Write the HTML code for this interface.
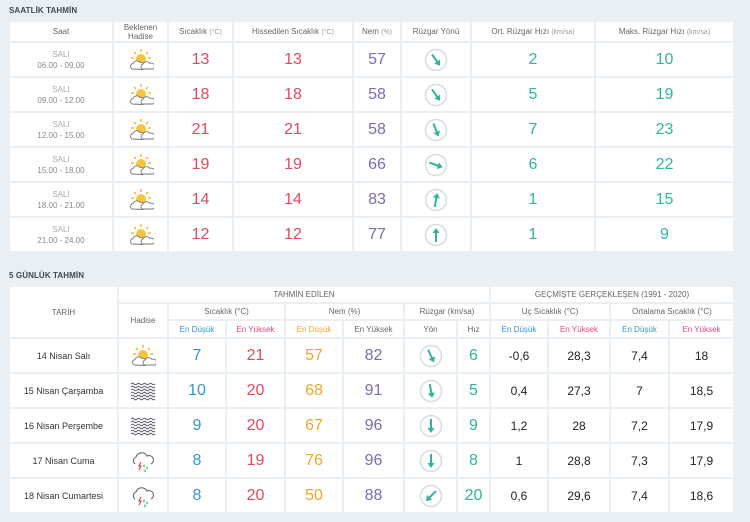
<!DOCTYPE html>
<html><head><meta charset="utf-8"><style>
body{margin:0;background:#e9eff3;width:750px;height:522px;overflow:hidden;font-family:"Liberation Sans",sans-serif;position:relative}
.t{position:absolute;left:9px;font-size:8px;font-weight:bold;color:#3c4a55;letter-spacing:.1px}
table{position:absolute;left:8px;border-spacing:2px;table-layout:fixed;border-collapse:separate}
td{background:#fff;text-align:center;padding:0;color:#666;font-size:8px;overflow:hidden;white-space:nowrap}
td small{color:#999;font-size:7px}
.d{font-size:8px;color:#888;line-height:11px}
.n{font-size:16px}
.r{color:#e5485f}.p{color:#7c6bb2}.g{color:#2fb59c}.b{color:#3596cc}.o{color:#eea62a}.k{color:#222;font-size:12px}
.hb{color:#3596cc}.hr{color:#e5487a}.ho{color:#eea62a}
svg{display:block;margin:auto}
</style></head><body>
<svg width="0" height="0" style="position:absolute"><defs>
<g id="sc"><g stroke="#f2b122" stroke-width="1.3"><line x1="13" y1="1" x2="13" y2="4"/><line x1="6" y1="4" x2="8" y2="6"/><line x1="20" y1="4" x2="18" y2="6"/><line x1="3" y1="10" x2="6" y2="10"/><line x1="23" y1="10" x2="20" y2="10"/></g><circle cx="13" cy="11" r="5" fill="#f7c53a"/><path d="M4 21a3 3 0 0 1 1-5.5 4 4 0 0 1 7-1 3 3 0 0 1 4 3 2.5 2.5 0 0 1-1 4z" fill="#fff" stroke="#777" stroke-width=".9"/><path d="M14 21a3 3 0 0 1 1-5 4 4 0 0 1 7-.5 3 3 0 0 1 3 5.5z" fill="#fff" stroke="#777" stroke-width=".9"/></g>
<g id="fog" fill="none" stroke="#667" stroke-width="1.1"><path d="M1 5q1.5-1.5 3 0t3 0 3 0 3 0 3 0 3 0 3 0 3 0"/><path d="M1 8q1.5-1.5 3 0t3 0 3 0 3 0 3 0 3 0 3 0 3 0"/><path d="M1 11q1.5-1.5 3 0t3 0 3 0 3 0 3 0 3 0 3 0 3 0"/><path d="M1 14q1.5-1.5 3 0t3 0 3 0 3 0 3 0 3 0 3 0 3 0"/><path d="M1 17q1.5-1.5 3 0t3 0 3 0 3 0 3 0 3 0 3 0 3 0"/><path d="M1 20q1.5-1.5 3 0t3 0 3 0 3 0 3 0 3 0 3 0 3 0"/></g>
<g id="st"><path d="M5 15a4 4 0 0 1 1-7 6 6 0 0 1 11-1 4 4 0 0 1 4 8" fill="none" stroke="#667" stroke-width="1.1"/><path d="M11 13l-2 4h2l-2 4" fill="none" stroke="#e5485f" stroke-width="1.2"/><path d="M14 15q-1.5 2.5 0 3.5q1.5-1 0-3.5zM17 17q-1.5 2.5 0 3.5q1.5-1 0-3.5zM15 20q-1.5 2.5 0 3.5q1.5-1 0-3.5z" fill="#3cb55a"/></g>
<g id="ar"><circle cx="12" cy="12" r="10.5" fill="#fff" stroke="#d5dde2" stroke-width="1.5"/><line x1="12" y1="5" x2="12" y2="16" stroke="#2fb59c" stroke-width="2"/><path d="M8.5 14l3.5 5 3.5-5z" fill="#2fb59c"/></g>
</defs></svg>

<div class="t" style="top:6px">SAATLİK TAHMİN</div>
<table style="top:20px">
<colgroup><col width="102"><col width="53"><col width="63"><col width="118"><col width="46"><col width="68"><col width="122"><col width="137"></colgroup>
<tr style="height:19px"><td>Saat</td><td style="line-height:9px">Beklenen<br>Hadise</td><td>Sıcaklık <small>(°C)</small></td><td>Hissedilen Sıcaklık <small>(°C)</small></td><td>Nem <small>(%)</small></td><td>Rüzgar Yönü</td><td>Ort. Rüzgar Hızı <small>(km/sa)</small></td><td>Maks. Rüzgar Hızı <small>(km/sa)</small></td></tr>
<tr style="height:33px"><td class="d"><span style="color:#aaa">SALI</span><br>06.00 - 09.00</td><td><svg width="26" height="24"><use href="#sc"/></svg></td><td class="n r">13</td><td class="n r">13</td><td class="n p">57</td><td><svg width="24" height="24"><use href="#ar" transform="rotate(-35 12 12)"/></svg></td><td class="n g">2</td><td class="n g">10</td></tr>
<tr style="height:33px"><td class="d"><span style="color:#aaa">SALI</span><br>09.00 - 12.00</td><td><svg width="26" height="24"><use href="#sc"/></svg></td><td class="n r">18</td><td class="n r">18</td><td class="n p">58</td><td><svg width="24" height="24"><use href="#ar" transform="rotate(-35 12 12)"/></svg></td><td class="n g">5</td><td class="n g">19</td></tr>
<tr style="height:33px"><td class="d"><span style="color:#aaa">SALI</span><br>12.00 - 15.00</td><td><svg width="26" height="24"><use href="#sc"/></svg></td><td class="n r">21</td><td class="n r">21</td><td class="n p">58</td><td><svg width="24" height="24"><use href="#ar" transform="rotate(-22 12 12)"/></svg></td><td class="n g">7</td><td class="n g">23</td></tr>
<tr style="height:33px"><td class="d"><span style="color:#aaa">SALI</span><br>15.00 - 18.00</td><td><svg width="26" height="24"><use href="#sc"/></svg></td><td class="n r">19</td><td class="n r">19</td><td class="n p">66</td><td><svg width="24" height="24"><use href="#ar" transform="rotate(-70 12 12)"/></svg></td><td class="n g">6</td><td class="n g">22</td></tr>
<tr style="height:33px"><td class="d"><span style="color:#aaa">SALI</span><br>18.00 - 21.00</td><td><svg width="26" height="24"><use href="#sc"/></svg></td><td class="n r">14</td><td class="n r">14</td><td class="n p">83</td><td><svg width="24" height="24"><use href="#ar" transform="rotate(190 12 12)"/></svg></td><td class="n g">1</td><td class="n g">15</td></tr>
<tr style="height:33px"><td class="d"><span style="color:#aaa">SALI</span><br>21.00 - 24.00</td><td><svg width="26" height="24"><use href="#sc"/></svg></td><td class="n r">12</td><td class="n r">12</td><td class="n p">77</td><td><svg width="24" height="24"><use href="#ar" transform="rotate(180 12 12)"/></svg></td><td class="n g">1</td><td class="n g">9</td></tr>
</table>

<div class="t" style="top:271px">5 GÜNLÜK TAHMİN</div>
<table style="top:285px">
<colgroup><col width="107"><col width="48"><col width="56"><col width="57"><col width="56"><col width="59"><col width="51"><col width="31"><col width="56"><col width="60"><col width="57"><col width="63"></colgroup>
<tr style="height:15px"><td rowspan="3">TARİH</td><td colspan="7">TAHMİN EDİLEN</td><td colspan="4">GEÇMİŞTE GERÇEKLEŞEN (1991 - 2020)</td></tr>
<tr style="height:15px"><td rowspan="2">Hadise</td><td colspan="2">Sıcaklık (°C)</td><td colspan="2">Nem (%)</td><td colspan="2">Rüzgar (km/sa)</td><td colspan="2">Uç Sıcaklık (°C)</td><td colspan="2">Ortalama Sıcaklık (°C)</td></tr>
<tr style="height:16px"><td class="hb">En Düşük</td><td class="hr">En Yüksek</td><td class="ho">En Düşük</td><td>En Yüksek</td><td>Yön</td><td>Hız</td><td class="hb">En Düşük</td><td class="hr">En Yüksek</td><td class="hb">En Düşük</td><td class="hr">En Yüksek</td></tr>
<tr style="height:33px"><td style="color:#333;font-size:9px">14 Nisan Salı</td><td><svg width="26" height="24"><use href="#sc"/></svg></td><td class="n b">7</td><td class="n r">21</td><td class="n o">57</td><td class="n p">82</td><td><svg width="24" height="24"><use href="#ar" transform="rotate(-25 12 12)"/></svg></td><td class="n g">6</td><td class="k">-0,6</td><td class="k">28,3</td><td class="k">7,4</td><td class="k">18</td></tr>
<tr style="height:33px"><td style="color:#333;font-size:9px">15 Nisan Çarşamba</td><td><svg width="26" height="24"><use href="#fog"/></svg></td><td class="n b">10</td><td class="n r">20</td><td class="n o">68</td><td class="n p">91</td><td><svg width="24" height="24"><use href="#ar" transform="rotate(-10 12 12)"/></svg></td><td class="n g">5</td><td class="k">0,4</td><td class="k">27,3</td><td class="k">7</td><td class="k">18,5</td></tr>
<tr style="height:33px"><td style="color:#333;font-size:9px">16 Nisan Perşembe</td><td><svg width="26" height="24"><use href="#fog"/></svg></td><td class="n b">9</td><td class="n r">20</td><td class="n o">67</td><td class="n p">96</td><td><svg width="24" height="24"><use href="#ar"/></svg></td><td class="n g">9</td><td class="k">1,2</td><td class="k">28</td><td class="k">7,2</td><td class="k">17,9</td></tr>
<tr style="height:33px"><td style="color:#333;font-size:9px">17 Nisan Cuma</td><td><svg width="26" height="24"><use href="#st"/></svg></td><td class="n b">8</td><td class="n r">19</td><td class="n o">76</td><td class="n p">96</td><td><svg width="24" height="24"><use href="#ar"/></svg></td><td class="n g">8</td><td class="k">1</td><td class="k">28,8</td><td class="k">7,3</td><td class="k">17,9</td></tr>
<tr style="height:33px"><td style="color:#333;font-size:9px">18 Nisan Cumartesi</td><td><svg width="26" height="24"><use href="#st"/></svg></td><td class="n b">8</td><td class="n r">20</td><td class="n o">50</td><td class="n p">88</td><td><svg width="24" height="24"><use href="#ar" transform="rotate(45 12 12)"/></svg></td><td class="n g">20</td><td class="k">0,6</td><td class="k">29,6</td><td class="k">7,4</td><td class="k">18,6</td></tr>
</table>
</body></html>
